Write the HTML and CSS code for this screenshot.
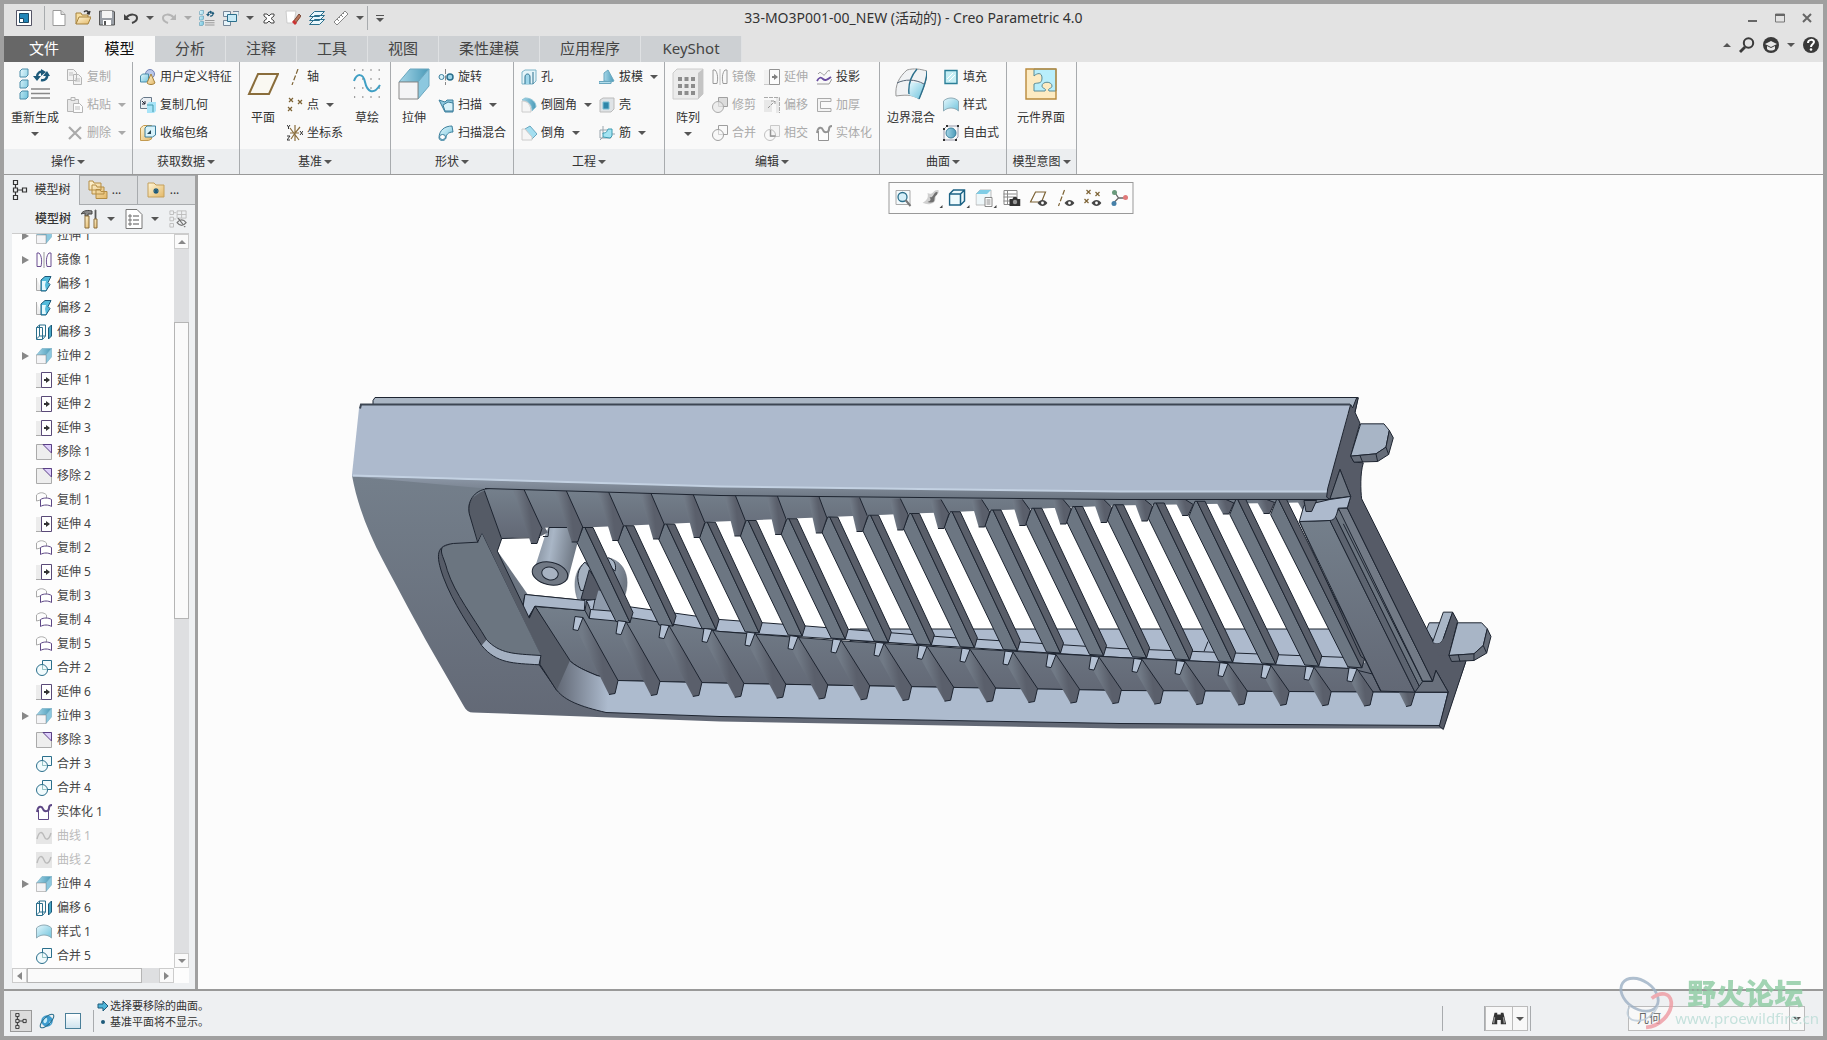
FILE: index.html
```html
<!DOCTYPE html>
<html lang="zh-CN">
<head>
  <meta charset="UTF-8">
  <meta name="viewport" content="width=device-width, initial-scale=1.0">
  <title>33-MO3P001-00_NEW (活动的) - Creo Parametric 4.0</title>
  <link rel="stylesheet" href="styles.css">
</head>
<body>
  <!-- Icon set -->
  <svg class="sprite" aria-hidden="true">
    <defs>
      <linearGradient id="aqua" x1="0" y1="0" x2="1" y2="1"><stop offset="0" stop-color="#e6f8fd"/><stop offset="1" stop-color="#6fc3dc"/></linearGradient>
      <linearGradient id="deep" x1="0" y1="0" x2="1" y2="0"><stop offset="0" stop-color="#a5d6e8"/><stop offset="1" stop-color="#4a9ab8"/></linearGradient>
      <linearGradient id="gold" x1="0" y1="0" x2="1" y2="1"><stop offset="0" stop-color="#fff6d8"/><stop offset="1" stop-color="#e3b868"/></linearGradient>
    </defs>
    <symbol id="i-app" viewBox="0 0 16 16"><path d="M.5.5h15v15H.5z" fill="#fff" stroke="#556"/><path d="M3.5 3.5h9v9h-9z" fill="#2386b8" stroke="#1b4a66"/><path d="M3.5 8.5h4v4h-4z" fill="#fff" stroke="#1b4a66"/></symbol>
    <symbol id="i-new" viewBox="0 0 16 16"><path d="M2 .5h8l4 4v11H2z" fill="#fff" stroke="#999"/><path d="M10 .5v4h4" fill="#ddd" stroke="#999"/></symbol>
    <symbol id="i-open" viewBox="0 0 16 16"><path d="M1 14V3h5l1 2h6v3" fill="#f7dea0" stroke="#a5813c"/><path d="M1 14l3-7h12l-3 7z" fill="url(#gold)" stroke="#a5813c"/><path d="M9 2c2-2 4-1 5 1M12 3l2 1 1-3" fill="none" stroke="#333" stroke-width="1.4"/></symbol>
    <symbol id="i-save" viewBox="0 0 16 16"><path d="M.5 1h14l1 1v13H.5z" fill="#9a9fa6" stroke="#555"/><path d="M3 1h10v7H3z" fill="#f4f4f4"/><path d="M4 10h8v5H4z" fill="#fff"/><path d="M5 11h2v4H5z" fill="#555"/></symbol>
    <symbol id="i-undo" viewBox="0 0 16 16"><path d="M3 8c4-5 11-4 11 0 0 3-2 4-5 5" fill="none" stroke="#444" stroke-width="2"/><path d="M1 4v6h6z" fill="#444"/></symbol>
    <symbol id="i-redo" viewBox="0 0 16 16"><path d="M13 8C9 3 2 4 2 8c0 3 2 4 5 5" fill="none" stroke="#b5b5b5" stroke-width="2"/><path d="M15 4v6H9z" fill="#b5b5b5"/></symbol>
    <symbol id="i-regen" viewBox="0 0 32 32">
      <g fill="url(#aqua)" stroke="#4a8ca8"><path d="M1 3l2-2h6v6L7 9H1zM1 14l2-2h6v6l-2 2H1zM1 25l2-2h6v6l-2 2H1z"/></g>
      <path d="M12 21h19M12 25.500h19M12 30h19" stroke="#888" stroke-width="1.6"/>
      <path d="M18 9c0-4 3-6 6-5M28 6c1 4-2 7-6 6" fill="none" stroke="#1d5a7a" stroke-width="2.4"/><path d="M14 8h8l-4 5zM24 8h7l-3-5zM22 1l5 3-5 4z" fill="#1d5a7a"/>
    </symbol>
    <symbol id="i-windows" viewBox="0 0 16 16"><path d="M.5 1.5h7v5h-7zM.5 10.5h7v5h-7zM10 1.500h6v4" fill="#e6f4fa" stroke="#789"/><path d="M4.5 4.5h9v7h-9z" fill="#c8eaf6" stroke="#2b6f8c"/></symbol>
    <symbol id="i-closewin" viewBox="0 0 16 16"><path d="M3 4h3l2 2 2-2h3v2l-3 2.500 3 2.500v2h-3l-2-2-2 2H3v-2l3-2.500L3 6z" fill="#fff" stroke="#444"/></symbol>
    <symbol id="i-erase" viewBox="0 0 16 16"><path d="M1 1h10l-2 12H2z" fill="#fff" stroke="#ccc"/><path d="M8 12l6-8 2 2-6 8z" fill="#b9745a" stroke="#7b4a38"/><path d="M7 12l2-2 3 3-2 2z" fill="#c33"/></symbol>
    <symbol id="i-layers" viewBox="0 0 16 16"><path d="M.5 14.5l5-5h10l-5 5zM.5 10.5l5-5h10l-5 5zM.5 6.5l5-5h10l-5 5z" fill="#e9f8fd" stroke="#2b6f8c"/></symbol>
    <symbol id="i-ruler" viewBox="0 0 16 16"><path d="M1 12L12 1l3 3L4 15z" fill="#fff" stroke="#888"/><path d="M4 9l2 2M6 7l1 1M8 5l2 2M10 3l1 1" stroke="#888"/></symbol>
    <symbol id="i-copy" viewBox="0 0 16 16"><path d="M.5.5h6l3 3v8h-9zM6.5 5.5h5l3 3v7h-8z" fill="#eee" stroke="#888"/><path d="M2 4h4M2 6h4M8 10h5M8 12h5" stroke="#999"/></symbol>
    <symbol id="i-paste" viewBox="0 0 16 16"><path d="M.5 2.5h11v12H.5z" fill="#ddd" stroke="#888"/><path d="M4 .5h4v3H4z" fill="#eee" stroke="#888"/><path d="M6.5 6.5h6l3 3v6h-9z" fill="#fff" stroke="#888"/><path d="M8 10h5M8 12h5" stroke="#999"/></symbol>
    <symbol id="i-delete" viewBox="0 0 16 16"><path d="M2 2l12 12M14 2L2 14" stroke="#777" stroke-width="2.2"/></symbol>
    <symbol id="i-udf" viewBox="0 0 16 16"><circle cx="10" cy="5" r="4.500" fill="#b9c8ea" stroke="#7182b5"/><path d="M.5 7l2-2h6v6l-2 2h-6z" fill="url(#aqua)" stroke="#4a8ca8"/><path d="M7 14l4-9 4 9c-2 2-6 2-8 0z" fill="url(#gold)" stroke="#a5813c"/></symbol>
    <symbol id="i-copygeom" viewBox="0 0 16 16"><path d="M.5 3l3-2.500h8v9l-2 2h-9z" fill="#e8edf2" stroke="#678"/><path d="M2 4l3 3M5 4v3H2" stroke="#223" fill="none"/><path d="M7 7l2-2h7v9l-2 2H7z" fill="#a8e4f8"/><path d="M7 8h6v7" fill="none" stroke="#49a"/></symbol>
    <symbol id="i-shrink" viewBox="0 0 16 16"><path d="M.5 3l3-2.500h8V14l-3 1.500h-8z" fill="url(#gold)" stroke="#c39a50"/><path d="M5 3l2-2h8.500v9l-3 2H5z" fill="#d7f2fa" stroke="#3c7f9c"/><path d="M7 9l4-4v4z" fill="#245"/></symbol>
    <symbol id="i-plane" viewBox="0 0 32 32"><path d="M11 6h20l-9 20H2z" fill="#faf8f2" stroke="#8a6d3b" stroke-width="2"/></symbol>
    <symbol id="i-axis" viewBox="0 0 16 16"><path d="M11 0L5 16" stroke="#7d6335" stroke-width="1.2" stroke-dasharray="5 2"/></symbol>
    <symbol id="i-point" viewBox="0 0 16 16"><path d="M2 1l4 4M6 1L2 5M11 3l4 4M15 3l-4 4M1 10l4 4M5 10l-4 4" stroke="#7d6335" stroke-width="1.2"/></symbol>
    <symbol id="i-csys" viewBox="0 0 16 16"><path d="M8 0v16M3 3l9 12M13 2L8 8l-4 6M3 8h9" fill="none" stroke="#8a6d3b" stroke-width="1.2"/><path d="M0 0l1.500 2L3 0M1.500 2v2M0 11h3l-3 4h3M13 6l3 4M16 6l-3 4" fill="none" stroke="#333"/></symbol>
    <symbol id="i-sketch" viewBox="0 0 32 32"><path d="M3 2h26M3 11h26M3 20h26M3 29h26" stroke="#444" stroke-width="1.2" stroke-dasharray="1.2 7"/><path d="M3 13c3-8 9-8 11 1s8 14 15 3" fill="none" stroke="#3f9fc4" stroke-width="2"/></symbol>
    <symbol id="i-extrude" viewBox="0 0 32 32"><path d="M1 14L12 1h19L20 14z" fill="url(#deep)" stroke="#6aa7bf"/><path d="M20 14L31 1v17L20 31z" fill="#8cc8df" stroke="#6aa7bf"/><path d="M1 14h19v17H1z" fill="#f4f4f6" stroke="#888"/></symbol>
    <symbol id="i-revolve" viewBox="0 0 16 16"><circle cx="3.5" cy="8" r="2.500" fill="#d8f2fa" stroke="#3c7f9c"/><circle cx="12" cy="8" r="3" fill="#9fd6ea" stroke="#2b6f8c" stroke-width="1.5"/><path d="M7.5 0v16" stroke="#888" stroke-dasharray="5 1.5"/></symbol>
    <symbol id="i-sweep" viewBox="0 0 16 16"><path d="M1 3l6 2 2-2h6v12h-8l-3-6z" fill="#8cc8df" stroke="#3c7f9c"/><path d="M5 8l5-3 5 1v8H7z" fill="#d8f2fa" stroke="#3c7f9c"/></symbol>
    <symbol id="i-blend" viewBox="0 0 16 16"><path d="M1 13C1 5 7 1 14 1l1 6c-5 0-7 3-7 6-1 3-6 4-7 0z" fill="url(#aqua)" stroke="#3c7f9c"/><ellipse cx="4.5" cy="12" rx="3" ry="2.5" fill="#fff" stroke="#3c7f9c"/></symbol>
    <symbol id="i-hole" viewBox="0 0 16 16"><path d="M1 3l3-2h11v11l-3 3H1z" fill="#e4f4f9" stroke="#7db4c8"/><path d="M4 15V8c0-4 5-4 5 0v7M12 3v12" fill="#9fd6ea" stroke="#2b6f8c"/></symbol>
    <symbol id="i-round" viewBox="0 0 16 16"><path d="M1 3l3-2c7 0 11 4 11 9l-4 4c0-6-3-10-10-11z" fill="url(#deep)" stroke="#8fc4d6"/><path d="M1 4c6 0 9 4 9 11H1z" fill="#f5f5f5" stroke="#ccc"/></symbol>
    <symbol id="i-chamfer" viewBox="0 0 16 16"><path d="M4 4l5-3 7 8-5 5z" fill="#a4def0" stroke="#6aa7bf"/><path d="M1 4h3l7 8v3H1z" fill="#f5f5f5" stroke="#ccc"/></symbol>
    <symbol id="i-draft" viewBox="0 0 16 16"><path d="M5 12V4l4-3 6 11-3 1z" fill="url(#deep)" stroke="#6aa7bf"/><path d="M0 12.500h12v2H0z" fill="#b4deec" stroke="#6aa7bf"/></symbol>
    <symbol id="i-shell" viewBox="0 0 16 16"><path d="M1 3l3-2h11v11l-3 3H1z" fill="#dfe3e6" stroke="#bbb"/><path d="M4 5h6v7H4z" fill="#2f86a9" stroke="#7bbdd3"/></symbol>
    <symbol id="i-rib" viewBox="0 0 16 16"><path d="M1 5h11v8H1zM4 1v8h12M1 15l3-3" fill="none" stroke="#99a5ad"/><path d="M4 12V8c4 0 4-2 5-4h4v7l-2 2z" fill="#a4e4f2" stroke="#3c9ab0"/></symbol>
    <symbol id="i-pattern" viewBox="0 0 32 32"><path d="M1 5l4-4h26v25l-5 5H1z" fill="#ebebeb" stroke="#ccc"/><path d="M26 5l5-4v25l-5 5z" fill="#c4c4c4"/><path d="M6 11h17M6 18h17M6 25h17" stroke="#8c8c8c" stroke-width="4" stroke-dasharray="4 2.5"/></symbol>
    <symbol id="i-mirror" viewBox="0 0 16 16"><path d="M1 14.500V1h2c3 3 3 9 2 13.500zM15 14.500V1h-2c-3 3-3 9-2 13.500z" fill="none" stroke="#6b4f91"/><path d="M8 0v16" stroke="#999"/></symbol>
    <symbol id="i-extend" viewBox="0 0 16 16"><path d="M0 1h6v14H0z" fill="#ececec"/><path d="M0 15.5h6" stroke="#aaa"/><path d="M5.500.5h10v15h-10z" fill="#fff" stroke="#5a4a78"/><path d="M8 8h3" stroke="#333" stroke-width="2"/><path d="M10 5l4 3-4 3z" fill="#333"/></symbol>
    <symbol id="i-project" viewBox="0 0 16 16"><path d="M2 5c3-4 4 1 6 1s3-6 6-4" fill="none" stroke="#999"/><path d="M1 12c2-4 4-4 6-2s4 1 8-2" fill="none" stroke="#6b4fa1" stroke-width="1.8"/><path d="M1 15h12l3-5" fill="none" stroke="#999"/></symbol>
    <symbol id="i-merge" viewBox="0 0 16 16"><path d="M6.500.5h9v9h-9z" fill="#f3fafc" stroke="#2b6f8c"/><circle cx="6" cy="10" r="5.5" fill="#eefafd" fill-opacity=".8" stroke="#2b6f8c"/><path d="M6.500 5v4.500h4" fill="none" stroke="#8bb" stroke-width=".8"/></symbol>
    <symbol id="i-trim" viewBox="0 0 16 16"><path d="M6.500.5h9v9h-9z" fill="#ccc" stroke="#666"/><circle cx="6" cy="10" r="5.5" fill="#ddd" fill-opacity=".7" stroke="#777"/></symbol>
    <symbol id="i-offset" viewBox="0 0 16 16"><path d="M0 3h8v12H0zM12 0h3v16h-3z" fill="#ddd"/><path d="M0 .5h15.500V16" fill="none" stroke="#777" stroke-dasharray="4 1"/><path d="M4 11l7-7M7 4h4v4" fill="none" stroke="#555" stroke-dasharray="3 1"/></symbol>
    <symbol id="i-intersect" viewBox="0 0 16 16"><path d="M6.500.5h9v11h-9z" fill="#f2f2f2" stroke="#aaa"/><circle cx="6" cy="10" r="5.5" fill="none" stroke="#999"/><path d="M6.500 5v6h5" fill="none" stroke="#555" stroke-width="1.5"/></symbol>
    <symbol id="i-thicken" viewBox="0 0 16 16"><path d="M15 1.500H1.500v13H15v-3H4.500v-7H15z" fill="#f2f2f2" stroke="#777"/></symbol>
    <symbol id="i-solidify" viewBox="0 0 16 16"><path d="M2.5 6v9.5h10V5" fill="#fff" stroke="#5d4785"/><path d="M1 8c1-7 5-6 6-3s6 3 6-1c0-2 1-3 3-3" fill="none" stroke="#5d4785" stroke-width="2"/></symbol>
    <symbol id="i-boundary" viewBox="0 0 32 32"><path d="M12 2c7-2 13-1 20 1 0 10-4 18-8 28C17 26 9 27 1 28 0 17 4 9 12 2z" fill="#f0f2f4" stroke="#999"/><path d="M14 14c5 0 10 1 15 2l-5 15-10-4z" fill="url(#aqua)"/><path d="M22 1c-6 7-9 16-8 25M32 3c0 10-4 18-8 28" fill="none" stroke="#2b6f8c" stroke-width="1.4"/><path d="M2 15c8-4 18-4 27 1" fill="none" stroke="#567"/></symbol>
    <symbol id="i-fill" viewBox="0 0 16 16"><path d="M2 1.500h12v13H2z" fill="#c5eef4" stroke="#2b7f98" stroke-width="1.4"/><path d="M4 10l6-6M6 12l6-6" stroke="#fff"/></symbol>
    <symbol id="i-style" viewBox="0 0 16 16"><path d="M.5 14V4c4-4 11-4 15 0v10c-4-4-11-4-15 0z" fill="url(#aqua)" stroke="#8fabb6"/></symbol>
    <symbol id="i-freestyle" viewBox="0 0 16 16"><path d="M1 4l3-3h11v11l-3 3H1z" fill="none" stroke="#99a"/><circle cx="8" cy="8" r="5" fill="url(#deep)" stroke="#3c7f9c"/><path d="M0 3h2v2H0zM3 0h2v2H3zM14 0h2v2h-2zM0 14h2v2H0zM12 14h2v2h-2z" fill="#333"/></symbol>
    <symbol id="i-puzzle" viewBox="0 0 32 32"><path d="M1 1h30v30H1z" fill="#fdebc2"/><path d="M9 1h22v22h-7c-2-3 3-2 3-5 0-5-10-5-10 0 0 3 5 2 3 5H9v-7c3-2 8 1 8-6 0-6-5-5-8-2z" fill="#b8eefb" stroke="#5a8b96"/><path d="M1 1h30v30H1z" fill="none" stroke="#b98a3c" stroke-width="1.4"/></symbol>
    <symbol id="i-offset-a" viewBox="0 0 16 16"><path d="M.5 2v12.500H6" fill="#eee" stroke="#aaa"/><path d="M5 4l4-3.500h6l-3 6 2 2-4 6.500H5z" fill="#52bbdc" stroke="#1d5a7a"/><path d="M6 5h4l-1 4 1 5H6z" fill="#e4f8fd"/></symbol>
    <symbol id="i-offset-b" viewBox="0 0 16 16"><path d="M.5 3.500l3-2.500h6v11l-3 3.500h-6zM3.500 1v11l-3 3M3.500 12h6M6.500 15V3.500h-6" fill="none" stroke="#2b6f8c"/><path d="M12.500 4l3-3v11l-3 3z" fill="#49a8c8" stroke="#1d5a7a"/></symbol>
    <symbol id="i-remove" viewBox="0 0 16 16"><path d="M.5.5h15v15H.5z" fill="#eee" stroke="#aaa"/><path d="M7 .5h8.500V9z" fill="#ded0fa" stroke="#5a3f85"/></symbol>
    <symbol id="i-copysurf" viewBox="0 0 16 16"><path d="M.5 9V3c3-3 7-3 10 0v4M.5 9l4-1" fill="none" stroke="#aaa"/><path d="M4.500 14.500v-7c3-2 8-2 11 0v7c-3-2-8-2-11 0z" fill="#fff" stroke="#5d4785"/></symbol>
    <symbol id="i-curve" viewBox="0 0 16 16"><path d="M0 0h16v16H0z" fill="#e6e6e6"/><path d="M1 11c2-8 5-8 7-3s5 4 7-3" fill="none" stroke="#bbb" stroke-width="1.4"/></symbol>
    <symbol id="i-tree" viewBox="0 0 16 20"><path d="M1.500.5h4v4h-4zM1.500 8h4v4h-4zM10.500 8h4v4h-4zM1.500 15.500h4v4h-4zM3.500 4.500V8M3.500 12v3.500M5.500 10h5" fill="none" stroke="#333" stroke-width="1.2"/></symbol>
    <symbol id="i-folders" viewBox="0 0 20 20"><g fill="url(#gold)" stroke="#b48d45"><path d="M1 10V1h4l1 2h7v7zM4 14V5h4l1 2h7v7zM8 18.500V9.500h4l1 2h6v7z"/></g></symbol>
    <symbol id="i-fav" viewBox="0 0 20 20"><path d="M2 17V3h6l2 2h8v12z" fill="url(#gold)" stroke="#c4a05c"/><path d="M10 8v6M7 11h6M8 9l4 4M12 9l-4 4" stroke="#1d5a7a" stroke-width="1.2"/></symbol>
    <symbol id="i-tools" viewBox="0 0 18 20"><path d="M0 5c2-4 8-4 11-3v3H7v2H4V4z" fill="#888" stroke="#444"/><path d="M4 7h4v12H4z" fill="url(#gold)" stroke="#8a6d3b"/><path d="M14 1h1v9h-1z" stroke="#777"/><path d="M13 10h3v9h-3z" fill="url(#gold)" stroke="#8a6d3b"/></symbol>
    <symbol id="i-list" viewBox="0 0 18 20"><path d="M1 .5h11l5 5v14H1z" fill="#fff" stroke="#777"/><path d="M8 7h6M8 11h6M8 15h6" stroke="#555"/><path d="M4 6h2v2H4zM4 10h2v2H4zM4 14h2v2H4z" fill="none" stroke="#555" stroke-width=".8"/></symbol>
    <symbol id="i-treehide" viewBox="0 0 20 20"><path d="M1 1h4v4H1zM1 8h4v4H1zM1 15h4v4H1zM5 3h3M5 10h3M9 1h10v8H9zM14 1v8M9 5h10" fill="none" stroke="#bbb"/><path d="M9 14c3-4 7-4 10 0-3 4-7 4-10 0zM10 9l8 10" fill="none" stroke="#777" stroke-width="1.3"/></symbol>
    <symbol id="i-zoomfit" viewBox="0 0 18 18"><path d="M1.500 1.500h14v14h-14z" fill="#f4fafc" stroke="#aaa"/><circle cx="8" cy="8" r="4.5" fill="#d5eff8" stroke="#2b6f8c" stroke-width="1.3"/><path d="M11 11l5 6" stroke="#777" stroke-width="2"/></symbol>
    <symbol id="i-shade" viewBox="0 0 18 18"><path d="M6 4c6 3 5-4 11-3 1 5-3 4-3 8s-2 5-5 6c-4 1-5-1-8-1 5-3 6-6 5-10z" fill="#d0d0d0"/><path d="M8 8c4 2 4-6 8-5 0 4-3 3-3 7s-3 4-7 3c3-1 4-2 2-5z" fill="#707070"/></symbol>
    <symbol id="i-cube" viewBox="0 0 18 18"><path d="M1 5l4-4h11v11l-4 4H1zM1 5h11v11M12 5l4-4" fill="#eefafd" stroke="#1d6385" stroke-width="1.5"/></symbol>
    <symbol id="i-views" viewBox="0 0 18 18"><path d="M.5 5l4-4h11v11l-4 4H.5z" fill="#eef7fa" stroke="#bbb"/><path d="M.5 5l4-4h11l-4 4z" fill="#7fcde6"/><path d="M9.500 8.500h7v9h-7z" fill="#fff" stroke="#888"/><path d="M11 11h4M11 13h4M11 15h4" stroke="#888"/></symbol>
    <symbol id="i-snap" viewBox="0 0 18 18"><path d="M1.500 1.500h13v14h-13zM1 5h13M5 1v14M1 8h13M1 12h13" fill="#fff" stroke="#888"/><path d="M7 10h3l1-2h3l1 2h3v7H7z" fill="#333"/><circle cx="12.5" cy="13" r="2.2" fill="#999"/></symbol>
    <symbol id="i-eyeplane" viewBox="0 0 18 18"><path d="M6 3h10l-4 10H1z" fill="none" stroke="#7d6335" stroke-width="1.2"/><path d="M8 14c3-4 7-4 10 0-3 4-7 4-10 0z" fill="#444"/><circle cx="13" cy="14" r="1.4" fill="#fff"/></symbol>
    <symbol id="i-eyeaxis" viewBox="0 0 18 18"><path d="M8 1L2 17" stroke="#7d6335" stroke-width="1.2" stroke-dasharray="5 2"/><path d="M8 14c3-4 7-4 10 0-3 4-7 4-10 0z" fill="#444"/><circle cx="13" cy="14" r="1.4" fill="#fff"/></symbol>
    <symbol id="i-eyepoint" viewBox="0 0 18 18"><path d="M3 1l4 4M7 1L3 5M12 3l4 4M16 3l-4 4M1 10l4 4M5 10l-4 4" stroke="#7d6335" stroke-width="1.2"/><path d="M8 14c3-4 7-4 10 0-3 4-7 4-10 0z" fill="#444"/><circle cx="13" cy="14" r="1.4" fill="#fff"/></symbol>
    <symbol id="i-spin" viewBox="0 0 18 18"><path d="M4 3l4 6-5 5M8 9h7" fill="none" stroke="#666" stroke-width="1.3"/><circle cx="4" cy="3.500" r="2.500" fill="#6a9a7c"/><circle cx="3.5" cy="14.5" r="2.5" fill="#4680a8"/><circle cx="15" cy="8.5" r="2.5" fill="#e07a7a"/></symbol>
    <symbol id="i-globe" viewBox="0 0 18 18"><circle cx="9" cy="9" r="6.5" fill="#3c9cd0"/><path d="M5 6c3-3 5 0 4 3s-3 3-4 1zM11 10l3-1-1 4z" fill="#c4ecfa"/><ellipse cx="9" cy="9" rx="10" ry="4" transform="rotate(-45 9 9)" fill="none" stroke="#2b6f8c" stroke-width="1.2"/></symbol>
    <symbol id="i-binoc" viewBox="0 0 18 16"><path d="M4 1h3v2h4V1h3l3 13h-6V9H7v5H1z" fill="#333"/><path d="M4 6l-1 7M14 6l1 7" stroke="#999" stroke-width="1.5"/></symbol>
    <symbol id="i-search" viewBox="0 0 16 16"><circle cx="9.5" cy="6" r="4.7" fill="none" stroke="#3a3a3a" stroke-width="2"/><path d="M6 10l-5 5" stroke="#3a3a3a" stroke-width="2.8"/></symbol>
    <symbol id="i-learn" viewBox="0 0 16 16"><circle cx="8" cy="8" r="8" fill="#3a3a3a"/><path d="M2 7l6-3 6 3-6 3zM4 9v3c2 2 6 2 8 0V9l-4 2z" fill="#e8e8e8"/></symbol>
    <symbol id="i-help" viewBox="0 0 16 16"><circle cx="8" cy="8" r="8" fill="#3a3a3a"/><path d="M5 6c0-4 6-4 6-1 0 2-3 2-3 5" fill="none" stroke="#fff" stroke-width="2"/><circle cx="8" cy="12.5" r="1.3" fill="#fff"/></symbol>
    <symbol id="i-min" viewBox="0 0 12 12"><path d="M1 9h9" stroke="#666" stroke-width="2"/></symbol>
    <symbol id="i-max" viewBox="0 0 12 12"><path d="M1.5 2h9v8h-9z" fill="none" stroke="#777"/><path d="M1 3h10" stroke="#666" stroke-width="2"/></symbol>
    <symbol id="i-x" viewBox="0 0 12 12"><path d="M2 2l8 8M10 2l-8 8" stroke="#666" stroke-width="2"/></symbol>
    <symbol id="i-arrow" viewBox="0 0 12 12"><path d="M1 4h5V1l5 5-5 5V8H1z" fill="#4fb4d8" stroke="#1d5a7a"/></symbol>
  </svg>

  <header class="titlebar">
    <div class="quick">
      <button class="quick-app" aria-label="Creo"><svg><use href="#i-app"/></svg></button>
      <button aria-label="新建"><svg><use href="#i-new"/></svg></button>
      <button aria-label="打开"><svg><use href="#i-open"/></svg></button>
      <button aria-label="保存"><svg><use href="#i-save"/></svg></button>
      <button aria-label="撤销"><svg><use href="#i-undo"/></svg></button>
      <button class="drop" aria-label="撤销列表"><i class="caret"></i></button>
      <button aria-label="重做" disabled><svg><use href="#i-redo"/></svg></button>
      <button class="drop" aria-label="重做列表" disabled><i class="caret"></i></button>
      <button aria-label="重新生成"><svg><use href="#i-regen"/></svg></button>
      <button aria-label="窗口"><svg><use href="#i-windows"/></svg></button>
      <button class="drop" aria-label="窗口列表"><i class="caret"></i></button>
      <button aria-label="关闭窗口"><svg><use href="#i-closewin"/></svg></button>
      <button aria-label="拭除"><svg><use href="#i-erase"/></svg></button>
      <button aria-label="层"><svg><use href="#i-layers"/></svg></button>
      <button aria-label="测量"><svg><use href="#i-ruler"/></svg></button>
      <button class="drop" aria-label="测量列表"><i class="caret"></i></button>
      <button class="quick-more" aria-label="自定义"><i class="caret"></i></button>
    </div>
    <h1>33-MO3P001-00_NEW (活动的) - Creo Parametric 4.0</h1>
    <div class="window-buttons">
      <button aria-label="最小化"><svg><use href="#i-min"/></svg></button>
      <button aria-label="最大化"><svg><use href="#i-max"/></svg></button>
      <button aria-label="关闭"><svg><use href="#i-x"/></svg></button>
    </div>
  </header>

  <nav class="tabs">
    <button class="tab file">文件</button>
    <button class="tab active">模型</button>
    <button class="tab">分析</button>
    <button class="tab">注释</button>
    <button class="tab">工具</button>
    <button class="tab">视图</button>
    <button class="tab wide">柔性建模</button>
    <button class="tab wide">应用程序</button>
    <button class="tab wide">KeyShot</button>
    <div class="help-buttons">
      <button aria-label="折叠"><i class="caret up"></i></button>
      <button aria-label="搜索"><svg><use href="#i-search"/></svg></button>
      <button aria-label="学习"><svg><use href="#i-learn"/></svg></button>
      <button class="drop" aria-label="更多"><i class="caret"></i></button>
      <button aria-label="帮助"><svg><use href="#i-help"/></svg></button>
    </div>
  </nav>

  <section class="ribbon">
    <div class="group ops">
      <div class="tools">
        <button class="big long"><svg><use href="#i-regen"/></svg>重新生成<i class="caret"></i></button>
        <div class="col">
          <button disabled><svg><use href="#i-copy"/></svg>复制</button>
          <button disabled><svg><use href="#i-paste"/></svg>粘贴<i class="caret"></i></button>
          <button disabled><svg><use href="#i-delete"/></svg>删除<i class="caret"></i></button>
        </div>
      </div>
      <button class="group-name">操作<i class="caret"></i></button>
    </div>
    <div class="group data">
      <div class="tools">
        <div class="col">
          <button><svg><use href="#i-udf"/></svg>用户定义特征</button>
          <button><svg><use href="#i-copygeom"/></svg>复制几何</button>
          <button><svg><use href="#i-shrink"/></svg>收缩包络</button>
        </div>
      </div>
      <button class="group-name">获取数据<i class="caret"></i></button>
    </div>
    <div class="group datum">
      <div class="tools">
        <button class="big"><svg><use href="#i-plane"/></svg>平面</button>
        <div class="col">
          <button><svg><use href="#i-axis"/></svg>轴</button>
          <button><svg><use href="#i-point"/></svg>点<i class="caret"></i></button>
          <button><svg><use href="#i-csys"/></svg>坐标系</button>
        </div>
        <button class="big"><svg><use href="#i-sketch"/></svg>草绘</button>
      </div>
      <button class="group-name">基准<i class="caret"></i></button>
    </div>
    <div class="group shape">
      <div class="tools">
        <button class="big"><svg><use href="#i-extrude"/></svg>拉伸</button>
        <div class="col">
          <button><svg><use href="#i-revolve"/></svg>旋转</button>
          <button><svg><use href="#i-sweep"/></svg>扫描<i class="caret"></i></button>
          <button><svg><use href="#i-blend"/></svg>扫描混合</button>
        </div>
      </div>
      <button class="group-name">形状<i class="caret"></i></button>
    </div>
    <div class="group engineering">
      <div class="tools">
        <div class="col">
          <button><svg><use href="#i-hole"/></svg>孔</button>
          <button><svg><use href="#i-round"/></svg>倒圆角<i class="caret"></i></button>
          <button><svg><use href="#i-chamfer"/></svg>倒角<i class="caret"></i></button>
        </div>
        <div class="col">
          <button><svg><use href="#i-draft"/></svg>拔模<i class="caret"></i></button>
          <button><svg><use href="#i-shell"/></svg>壳</button>
          <button><svg><use href="#i-rib"/></svg>筋<i class="caret"></i></button>
        </div>
      </div>
      <button class="group-name">工程<i class="caret"></i></button>
    </div>
    <div class="group edit">
      <div class="tools">
        <button class="big"><svg><use href="#i-pattern"/></svg>阵列<i class="caret"></i></button>
        <div class="col">
          <button disabled><svg><use href="#i-mirror"/></svg>镜像</button>
          <button disabled><svg><use href="#i-trim"/></svg>修剪</button>
          <button disabled><svg><use href="#i-merge"/></svg>合并</button>
        </div>
        <div class="col">
          <button disabled><svg><use href="#i-extend"/></svg>延伸</button>
          <button disabled><svg><use href="#i-offset"/></svg>偏移</button>
          <button disabled><svg><use href="#i-intersect"/></svg>相交</button>
        </div>
        <div class="col">
          <button><svg><use href="#i-project"/></svg>投影</button>
          <button disabled><svg><use href="#i-thicken"/></svg>加厚</button>
          <button disabled><svg><use href="#i-solidify"/></svg>实体化</button>
        </div>
      </div>
      <button class="group-name">编辑<i class="caret"></i></button>
    </div>
    <div class="group surface">
      <div class="tools">
        <button class="big long"><svg><use href="#i-boundary"/></svg>边界混合</button>
        <div class="col">
          <button><svg><use href="#i-fill"/></svg>填充</button>
          <button><svg><use href="#i-style"/></svg>样式</button>
          <button><svg><use href="#i-freestyle"/></svg>自由式</button>
        </div>
      </div>
      <button class="group-name">曲面<i class="caret"></i></button>
    </div>
    <div class="group intent">
      <div class="tools">
        <button class="big long"><svg><use href="#i-puzzle"/></svg>元件界面</button>
      </div>
      <button class="group-name">模型意图<i class="caret"></i></button>
    </div>
  </section>

  <main>
    <aside class="navigator">
      <div class="nav-tabs">
        <button class="active"><svg><use href="#i-tree"/></svg>模型树</button>
        <button aria-label="文件夹浏览器"><svg><use href="#i-folders"/></svg>...</button>
        <button aria-label="收藏夹"><svg><use href="#i-fav"/></svg>...</button>
      </div>
      <div class="tree-head">
        <h2>模型树</h2>
        <button aria-label="设置"><svg><use href="#i-tools"/></svg><i class="caret"></i></button>
        <button aria-label="显示"><svg><use href="#i-list"/></svg><i class="caret"></i></button>
        <button aria-label="过滤"><svg><use href="#i-treehide"/></svg></button>
      </div>
      <div class="tree-box">
        <ul class="tree">
          <li class="parent"><svg><use href="#i-extrude"/></svg>拉伸 1</li>
          <li class="parent"><svg><use href="#i-mirror"/></svg>镜像 1</li>
          <li><svg><use href="#i-offset-a"/></svg>偏移 1</li>
          <li><svg><use href="#i-offset-a"/></svg>偏移 2</li>
          <li><svg><use href="#i-offset-b"/></svg>偏移 3</li>
          <li class="parent"><svg><use href="#i-extrude"/></svg>拉伸 2</li>
          <li><svg><use href="#i-extend"/></svg>延伸 1</li>
          <li><svg><use href="#i-extend"/></svg>延伸 2</li>
          <li><svg><use href="#i-extend"/></svg>延伸 3</li>
          <li><svg><use href="#i-remove"/></svg>移除 1</li>
          <li><svg><use href="#i-remove"/></svg>移除 2</li>
          <li><svg><use href="#i-copysurf"/></svg>复制 1</li>
          <li><svg><use href="#i-extend"/></svg>延伸 4</li>
          <li><svg><use href="#i-copysurf"/></svg>复制 2</li>
          <li><svg><use href="#i-extend"/></svg>延伸 5</li>
          <li><svg><use href="#i-copysurf"/></svg>复制 3</li>
          <li><svg><use href="#i-copysurf"/></svg>复制 4</li>
          <li><svg><use href="#i-copysurf"/></svg>复制 5</li>
          <li><svg><use href="#i-merge"/></svg>合并 2</li>
          <li><svg><use href="#i-extend"/></svg>延伸 6</li>
          <li class="parent"><svg><use href="#i-extrude"/></svg>拉伸 3</li>
          <li><svg><use href="#i-remove"/></svg>移除 3</li>
          <li><svg><use href="#i-merge"/></svg>合并 3</li>
          <li><svg><use href="#i-merge"/></svg>合并 4</li>
          <li><svg><use href="#i-solidify"/></svg>实体化 1</li>
          <li class="hidden-item"><svg><use href="#i-curve"/></svg>曲线 1</li>
          <li class="hidden-item"><svg><use href="#i-curve"/></svg>曲线 2</li>
          <li class="parent"><svg><use href="#i-extrude"/></svg>拉伸 4</li>
          <li><svg><use href="#i-offset-b"/></svg>偏移 6</li>
          <li><svg><use href="#i-style"/></svg>样式 1</li>
          <li><svg><use href="#i-merge"/></svg>合并 5</li>
        </ul>
        <div class="vscroll">
          <button aria-label="向上"><i class="caret up"></i></button>
          <div class="track"><div class="thumb"></div></div>
          <button aria-label="向下"><i class="caret"></i></button>
        </div>
        <div class="hscroll">
          <button aria-label="向左"><i class="caret left"></i></button>
          <div class="track"><div class="thumb"></div></div>
          <button aria-label="向右"><i class="caret right"></i></button>
        </div>
      </div>
    </aside>

    <section class="canvas">
      <div class="view-bar">
        <button aria-label="重新调整"><svg><use href="#i-zoomfit"/></svg></button>
        <button class="more" aria-label="渲染"><svg><use href="#i-shade"/></svg></button>
        <button class="more" aria-label="显示样式"><svg><use href="#i-cube"/></svg></button>
        <button class="more" aria-label="已保存方向"><svg><use href="#i-views"/></svg></button>
        <button aria-label="视图管理器"><svg><use href="#i-snap"/></svg></button>
        <button aria-label="平面显示"><svg><use href="#i-eyeplane"/></svg></button>
        <button aria-label="轴显示"><svg><use href="#i-eyeaxis"/></svg></button>
        <button aria-label="点显示"><svg><use href="#i-eyepoint"/></svg></button>
        <button aria-label="旋转中心"><svg><use href="#i-spin"/></svg></button>
      </div>

      <!-- Part geometry -->
      <svg class="part" viewBox="198 175 1625 813" role="img" aria-label="33-MO3P001-00_NEW">
        <defs>
          <linearGradient id="face" x1="0" y1="0" x2="0" y2="1"><stop offset="0" stop-color="#747f8b"/><stop offset="1" stop-color="#626875"/></linearGradient>
          <linearGradient id="bevel" x1="0" y1="0" x2="0" y2="1"><stop offset="0" stop-color="#8d98a7"/><stop offset="1" stop-color="#6b7581"/></linearGradient>
          <linearGradient id="shelf" gradientUnits="userSpaceOnUse" x1="552" y1="0" x2="608" y2="0"><stop offset="0" stop-color="#5a606c"/><stop offset="1" stop-color="#adbbce"/></linearGradient>
          <linearGradient id="tube" x1="0" y1="0" x2="1" y2=".2"><stop offset="0" stop-color="#7b8592"/><stop offset=".45" stop-color="#a9b6c6"/><stop offset="1" stop-color="#6f7884"/></linearGradient>
          <linearGradient id="tooth" x1="0" y1=".6" x2="1" y2=".4"><stop offset=".2" stop-color="#717a86"/><stop offset=".6" stop-color="#5a5f6b"/></linearGradient>
        </defs>
        <path d="M352 475C357 503 368 532 383 560 400 592 416 622 430 647L464 706Q467 712 473 712L720 721 1120 728H1443L1466 662 1425 650 1345 490z" fill="url(#face)"/>

        <!-- grille opening and back ledges -->
        <path d="M497 550L502 536 545 527 1240 500 1300 500 1365 662 560 640z" fill="#fff"/>
        <path d="M850 628.500H1330L1350 668 850 640z" class="lit"/>
        <path d="M1208 641l-4 10" class="line"/>
        <path d="M525 594L585 600 720 619 800 625 950 637 1120 648 1348 657V668L1120 657 720 631 540 613 528 618 522 609z" class="lit"/>
        <path d="M535 606L585 610 720 631 850 641 1000 650 1120 657 1350 668 1448 692 1120 690 740 683 618 680 597 675C580 668 572 664 565 655z" fill="url(#face)" class="ink"/>

        <!-- screw bosses -->
        <g transform="translate(340 380) scale(.3333)">
          <path d="M617 460L582 570C600 545 680 560 683 600L712 490 700 440H625z" fill="url(#tube)"/>
          <ellipse cx="630" cy="579" rx="54" ry="34" transform="rotate(12 630 579)" fill="#717985" class="bold"/>
          <ellipse cx="630" cy="579" rx="25" ry="19" transform="rotate(12 630 579)" fill="#a7b2c1" class="bold"/>
          <path d="M735 545C700 570 700 620 712 655l50 28 68 5C880 630 870 545 805 532z" fill="url(#tube)" class="thin"/>
          <path d="M805 532c20 5 25 25 20 40l-30-30z" fill="#a9b6c6" class="bold"/>
          <path d="M722 630c-15-40-10-65 13-85l22 25-20 60z" fill="#a4b0bf" class="bold"/>
          <path d="M748 568l42 65-27 27-40-4z" fill="#555a66" class="bold"/>
          <path d="M775 630l-15 55 65 15-10-60z" fill="#8f9bab"/>
          <path d="M555 642l180 18-2 30-148-13-20 34-17-25z" fill="#a9b6c8" class="bold"/>
          <path d="M735 690l5-30 12 30-4 24z" fill="#6a727e" class="bold"/>
          <path d="M740 660l25-3-6 30M752 687l65 5 15 30-84-8z" fill="#aebbce" class="bold"/>
        </g>
        <path d="M484 490L1120 499H1330L1300 502 1113 505 720 521 585 527 545 527 548 532 540 536 502 538z" fill="url(#face)"/>
        <path d="M502 538L540 537M543 536l5 0 1-9h18" class="line"/>

        <!-- lit lower shelf -->
        <path d="M535 606L565 655C572 664 580 668 597 675L618 680 740 683 1120 690 1448 692 1440 725 1120 723 720 716 606 712C580 706 565 700 557 690L539 664 529 617z" fill="url(#shelf)" class="ink"/>

        <g id="ribs"></g>

        <!-- left wall and finger recess -->
        <g transform="translate(340 380) scale(.3333)">
          <path d="M433 330C390 350 380 370 386 395L415 485 426 460 600 825V852L650 930 690 840 585 677 568 713 472 512 485 475z" fill="#555b66"/>
          <path d="M650 930C640 915 690 850 690 840L735 870 720 970z" fill="url(#tube)" opacity="0"/>
          <path d="M650 930L600 852V825L426 460 413 485 388 400C380 355 410 325 450 324M433 330L485 475 472 512 568 713 585 677 690 840" class="bold" fill="none"/>
          <path d="M415 485l-75 4C290 495 285 520 310 590 340 670 390 740 425 795 470 850 520 848 597 853L603 825 426 460z" fill="#6b7580"/>
          <path d="M340 489C290 495 285 520 310 590 340 670 390 740 425 795L440 778C400 710 345 640 322 570 312 530 300 520 306 502z" fill="#565c68"/>
          <path d="M425 795C470 850 520 848 597 853L603 825C520 820 480 820 440 778z" fill="#a4b0c1"/>
          <path d="M415 485l-75 4C290 495 285 520 310 590 340 670 390 740 425 795 470 850 520 848 597 853L603 825C520 820 480 820 440 778 400 710 345 640 322 570 312 530 300 520 306 502" class="bold" fill="none"/>
        </g>

        <!-- front cover face -->
        <path d="M373 404v-4l2-3H1358l-3 15H1350z" fill="#aab6c4" class="ink"/>
        <path d="M352 474L359 408 361 404H1350L1328 492 1120 491 720 486 352 476z" fill="#adbacd"/>
        <path d="M360 408l1-4H1350" class="edge"/>
        <path d="M353 476L720 487 1120 492H1328V499H1120L720 495 485 488z" fill="url(#bevel)"/>
        <path d="M485 488L720 495 1120 499H1330" class="line"/>
        <path d="M353 475L720 486 1120 491H1328" fill="none" stroke="#c3d1e2" stroke-width="2"/>

        <!-- end cap, rails and clips -->
        <g transform="translate(1100 380) scale(.3333)" class="bold">
          <path d="M598 423l92-3 255 515-103-3z" fill="url(#face)"/>
          <path d="M598 423l185 405 12 8 48 96" fill="none"/>
          <path d="M690 420l15-15 257 520-17 10z" fill="#5c636f"/>
          <path d="M705 405l13-22 250 520-6 22z" fill="#6c7580"/>
          <path d="M730 430l238 473" fill="none"/>
          <path d="M715 383h27l256 519h-30z" fill="#727a86"/>
          <path d="M978 750l10-23h55l-30 70z" fill="#a9b6c6"/>
          <path d="M775 52L765 95 780 128 752 227 762 245 790 247C780 280 782 330 785 355L1000 785 1060 700 1098 842 1030 1047 1018 1037 1045 935 1008 870 998 902 742 383 752 348 720 267 690 357 680 350 683 325 752 72 758 82 770 52z" fill="#565b67"/>
          <path d="M720 267l-30 88 62-7z" fill="#6f7783"/>
          <path d="M612 375L690 357 752 348 742 382 715 383C708 410 705 418 690 420L598 423z" fill="#adbacd"/>
          <path d="M612 360h38l-15 33h-17z" fill="#666d79"/>
          <path d="M1008 870l37 65H945l23-32h30z" fill="#69707c"/>
          <path d="M782 130h70l16 20-10 50-30 20-76 7z" fill="#a8b5c6"/>
          <path d="M868 150l12 22-14 50-33 21-71 2-10-18 76-7 30-20zM828 220l5 23M858 200l8 22M780 225l8 20" fill="#666d79"/>
          <path d="M1030 695h28L1030 775C1022 795 1005 792 998 785z" fill="#a9b6c6"/>
          <path d="M1058 695l15 28-26 102-30 0-15-38c15 6 22 0 28-12z" fill="#565b67" stroke="none"/>
          <path d="M1058 695l15 28-26 102M1058 695l-28 80" fill="none"/>
          <path d="M1073 727h72l17 18-12 50-28 25-75 5z" fill="#a8b5c6"/>
          <path d="M1162 745l11 23-13 50-38 22-67 3-8-18 75-5 28-25zM1122 820v20M1150 795l10 23M1075 823l5 20" fill="#666d79"/>
        </g>
      </svg>
    </section>
  </main>

  <footer class="status">
    <div class="status-tools">
      <button class="pressed" aria-label="导航器"><svg><use href="#i-tree"/></svg></button>
      <button aria-label="浏览器"><svg><use href="#i-globe"/></svg></button>
      <button aria-label="全屏"><span class="pane"></span></button>
    </div>
    <ul class="messages">
      <li><svg><use href="#i-arrow"/></svg>选择要移除的曲面。</li>
      <li><span class="dot"></span>基准平面将不显示。</li>
    </ul>
    <div class="find">
      <button aria-label="查找"><svg><use href="#i-binoc"/></svg></button>
      <button class="drop" aria-label="查找列表"><i class="caret"></i></button>
    </div>
    <div class="filter">
      <select aria-label="选择过滤器"><option>几何</option></select>
      <i class="caret"></i>
    </div>
    <div class="watermark">
      <svg viewBox="0 0 60 56"><ellipse cx="22" cy="18" rx="22" ry="15" transform="rotate(35 22 18)" fill="none" stroke="#9db0c4" stroke-width="3"/><path d="M12 30c-6 8-2 16 8 16 10 0 18-8 22-16" fill="none" stroke="#bccbd8" stroke-width="2"/><path d="M35 22c10-8 20-6 21 4 1 12-12 26-27 27" fill="none" stroke="#ef9aa2" stroke-width="4"/></svg>
      <div><strong>野火论坛</strong><span>www.proewildfire.cn</span></div>
    </div>
  </footer>
  <script src="ribs.js"></script>
</body>
</html>
```

FILE: styles.css
```css
:root {
  --frame: #a0a0a0;
  --chrome: #e3e3e3;
  --panel: #eef0f2;
  --line: #a8abae;
  --text: #333;
  --dim: #aaa;
}

* {
  box-sizing: border-box;
}

body {
  margin: 0;
  height: 100vh;
  display: flex;
  flex-direction: column;
  border: 4px solid var(--frame);
  background: var(--chrome);
  color: var(--text);
  font: 12px/16px "Noto Sans", "Noto Sans CJK SC", sans-serif;
  overflow: hidden;
}

button {
  display: flex;
  align-items: center;
  justify-content: center;
  padding: 0;
  border: 0;
  background: none;
  color: inherit;
  font: inherit;
  white-space: nowrap;
}

button:disabled {
  color: var(--dim);
}

svg {
  width: 16px;
  height: 16px;
  flex: none;
}

ul {
  list-style: none;
  margin: 0;
  padding: 0;
}

.sprite {
  position: absolute;
  width: 0;
  height: 0;
}

.caret {
  border: 4px solid transparent;
  border-top: 4px solid #555;
  border-bottom: 0;
}

.caret.up {
  border-top: 0;
  border-bottom: 4px solid #555;
}

.caret.left {
  border: 4px solid transparent;
  border-right: 5px solid #888;
  border-left: 0;
}

.caret.right {
  border: 4px solid transparent;
  border-left: 5px solid #888;
  border-right: 0;
}

button:disabled .caret {
  border-top-color: #aaa;
}

/* Title bar */
.titlebar {
  display: grid;
  grid-template-columns: 1fr auto 1fr;
  align-items: center;
  height: 32px;
  flex: none;
  padding-bottom: 4px;
}

.titlebar h1 {
  margin: 0;
  font-size: 14px;
  line-height: 20px;
  font-weight: 400;
}

.quick {
  display: flex;
  height: 24px;
}

.quick button {
  width: 24px;
}

.quick .drop {
  width: 14px;
}

.quick .quick-app {
  width: 41px;
  margin-right: 2px;
  border-right: 1px solid var(--line);
}

.quick .quick-more {
  flex-direction: column;
  gap: 2px;
  border-left: 1px solid var(--line);
}

.quick-more::before {
  content: "";
  width: 8px;
  border-top: 1px solid #555;
}

.window-buttons {
  display: flex;
  justify-content: flex-end;
  gap: 15px;
  padding-right: 10px;
}

.window-buttons svg {
  width: 12px;
  height: 12px;
}

/* Ribbon tabs */
.tabs {
  display: flex;
  height: 26px;
  flex: none;
  font-size: 15px;
  line-height: 24px;
}

.tab {
  width: 71px;
  padding-bottom: 2px;
  background: #cdd0d3;
  border-right: 1px solid #dfe1e3;
  color: #444;
}

.tab.wide {
  width: 101px;
}

.tab.file {
  width: 80px;
  background: #676767;
  border: 0;
  color: #fff;
}

.tab.active {
  background: #f9f9f9;
  border: 0;
  color: #111;
}

.help-buttons {
  display: flex;
  gap: 8px;
  height: 17px;
  margin-left: auto;
  padding-right: 4px;
}

.help-buttons .drop {
  width: 8px;
}

/* Ribbon */
.ribbon {
  display: flex;
  flex: none;
  background: #f9f9f9;
  border-bottom: 1px solid #999;
}

.group {
  border-right: 1px solid var(--line);
}

.tools {
  display: flex;
  gap: 2px;
  height: 87px;
  padding: 1px 1px 0;
}

.group-name {
  width: 100%;
  height: 25px;
  gap: 2px;
  background: #eceef0;
}

.col {
  display: flex;
  flex-direction: column;
}

.col button {
  height: 28px;
  gap: 4px;
  justify-content: flex-start;
}

.col .caret {
  margin-left: 3px;
}

.col button:disabled svg {
  filter: grayscale(1);
  opacity: 0.6;
}

.big {
  flex-direction: column;
  justify-content: flex-start;
  width: 44px;
  padding-top: 5px;
}

.big.long {
  width: 56px;
}

.big svg {
  width: 32px;
  height: 32px;
  margin-bottom: 10px;
}

.big .caret {
  margin-top: 6px;
}

.ops { width: 129px; }
.ops .tools { padding-left: 3px; gap: 4px; }
.data { width: 107px; }
.data .tools { padding-left: 7px; }
.datum { width: 151px; }
.shape { width: 123px; }
.engineering { width: 151px; }
.engineering .tools { padding-left: 7px; gap: 7px; }
.edit { width: 215px; }
.edit .col + .col { margin-left: 6px; }
.surface { width: 127px; }
.surface .tools { padding-left: 3px; gap: 4px; }
.intent { width: 70px; }
.intent .tools { padding-left: 6px; }

/* Workspace */
main {
  display: flex;
  flex: 1;
  min-height: 0;
}

.navigator {
  display: flex;
  flex-direction: column;
  width: 194px;
  flex: none;
  background: var(--panel);
  border-right: 3px solid var(--frame);
}

.nav-tabs {
  display: flex;
  height: 30px;
  flex: none;
}

.nav-tabs button {
  flex: 1;
  gap: 4px;
  padding-right: 8px;
  background: #dcdee0;
  border: 1px solid var(--line);
  border-width: 1px 0 1px 1px;
}

.nav-tabs .active {
  flex: 0 0 75px;
  gap: 6px;
  padding: 0;
  background: none;
  border: 0;
}

.nav-tabs svg {
  height: 20px;
}

.nav-tabs button + button svg {
  width: 20px;
}

.tree-head {
  display: flex;
  align-items: center;
  justify-content: flex-end;
  gap: 10px;
  height: 28px;
  flex: none;
  padding-right: 8px;
}

.tree-head h2 {
  margin: 0;
  font-size: 12px;
  font-weight: 500;
}

.tree-head button {
  gap: 8px;
}

.tree-head svg {
  width: 18px;
  height: 20px;
}

.tree-box {
  display: grid;
  grid-template: minmax(0, 1fr) 15px / 1fr 15px;
  flex: 1;
  min-height: 0;
  margin: 0 6px 6px 8px;
  background: #fdfdfd;
  border-top: 1px solid #ccc;
}

.tree {
  display: flex;
  flex-direction: column;
  justify-content: flex-end;
  overflow: hidden;
}

.tree li {
  display: flex;
  align-items: center;
  gap: 5px;
  height: 24px;
  flex: none;
  padding-left: 24px;
  color: #444;
}

.tree .parent {
  padding-left: 10px;
}

.tree .parent::before {
  content: "";
  margin-right: 2px;
  border: 4px solid transparent;
  border-left: 7px solid #888;
  border-right: 0;
}

.tree .hidden-item {
  color: #bbb;
}

.vscroll {
  display: flex;
  flex-direction: column;
}

.hscroll {
  display: flex;
}

.vscroll button,
.hscroll button {
  width: 15px;
  height: 15px;
  flex: none;
  background: #fafafa;
  border: 1px solid #ccc;
}

.vscroll .caret {
  border-top-color: #888;
  border-bottom-color: #888;
}

.track {
  flex: 1;
  background: #dedfe1;
}

.thumb {
  background: #fafafa;
  border: 1px solid #b5b5b5;
}

.vscroll .track {
  padding-top: 73px;
}

.vscroll .thumb {
  height: 47%;
}

.hscroll .thumb {
  width: 87%;
  height: 15px;
}

.canvas {
  position: relative;
  flex: 1;
  min-width: 0;
  background: #fcfcfc;
}

.view-bar {
  position: absolute;
  top: 7px;
  left: 50%;
  display: flex;
  gap: 9px;
  padding: 6px 4px 6px 5px;
  background: #fcfcfc;
  border: 1px solid #999;
  transform: translateX(-50%);
}

.view-bar svg {
  width: 18px;
  height: 18px;
}

.view-bar .more {
  position: relative;
}

.view-bar .more::after {
  content: "";
  position: absolute;
  right: -3px;
  bottom: -1px;
  border-left: 3px solid transparent;
  border-bottom: 3px solid #444;
}

/* Part */
.part {
  display: block;
  width: 100%;
  height: 100%;
}

.part .lit,
.part .ink,
.part .line {
  stroke: #1d2430;
  stroke-width: 1;
  stroke-linejoin: round;
}

.part .lit {
  fill: #adbacd;
}

.part .line {
  fill: none;
}

.part .edge {
  fill: none;
  stroke: #3d4653;
  stroke-width: 2;
}

.part .bold {
  stroke: #1d2430;
  stroke-width: 3;
  stroke-linejoin: round;
}

.part .thin {
  stroke: #4b5460;
  stroke-width: 1;
}

/* Status bar */
.status {
  position: relative;
  display: flex;
  align-items: center;
  height: 47px;
  flex: none;
  background: var(--panel);
  border-top: 2px solid #999;
}

.status-tools {
  display: flex;
  align-items: center;
  gap: 4px;
  height: 22px;
  margin-top: 14px;
  padding: 0 9px 0 6px;
  border-right: 1px solid var(--line);
}

.status-tools button {
  width: 22px;
  height: 22px;
}

.status-tools .pressed {
  background: #dcdcdc;
  border: 1px solid #999;
}

.pane {
  width: 16px;
  height: 16px;
  background: linear-gradient(#fff, #cfe3ee);
  border: 1px solid #4a7f99;
}

.messages {
  padding-left: 3px;
  font-size: 11px;
}

.messages li {
  display: flex;
  align-items: center;
  gap: 1px;
}

.messages svg {
  width: 12px;
  height: 12px;
}

.dot {
  width: 4px;
  height: 4px;
  margin: 0 4px;
  border-radius: 2px;
  background: #1d5a7a;
}

.find {
  display: flex;
  margin: 10px 97px 0 auto;
  padding: 0 2px;
  border: solid var(--line);
  border-width: 0 1px;
}

.find button {
  width: 28px;
  height: 25px;
  background: #f8f8f8;
  border: 1px solid #bbb;
}

.find .drop {
  width: 15px;
  border-left: 0;
}

.find::before {
  content: "";
  margin: 0 42px 0 -45px;
  border-left: 1px solid var(--line);
}

.filter {
  display: flex;
  align-items: center;
  width: 177px;
  height: 25px;
  margin: 10px 18px 0 0;
  background: #f8f8f8;
  border: 1px solid #bbb;
}

.filter select {
  flex: 1;
  height: 100%;
  padding: 0 8px;
  appearance: none;
  background: none;
  border: 0;
  border-right: 1px solid #bbb;
  color: #666;
  font: inherit;
}

.filter .caret {
  margin: 0 3px;
}

.watermark {
  position: absolute;
  right: 4px;
  bottom: 4px;
  display: flex;
  opacity: 0.8;
  pointer-events: none;
}

.watermark svg {
  width: 56px;
  height: 56px;
}

.watermark div {
  display: flex;
  flex-direction: column;
}

.watermark strong {
  padding-left: 12px;
  color: #8ccba2;
  font: 900 29px/32px "Noto Sans CJK SC", sans-serif;
}

.watermark span {
  color: #b9dcd6;
  font: 15px/20px "Noto Sans", sans-serif;
}
```

FILE: ribs.js
```js
// Draws the slanted louvre bars and the teeth above and below them
const ribs = document.getElementById('ribs');

function shape(type, points, fill, cls) {
  const p = document.createElementNS('http://www.w3.org/2000/svg', type);
  p.setAttribute('points', points.map(pt => pt.join(',')).join(' '));
  p.setAttribute('fill', fill);
  if (cls) p.setAttribute('class', cls);
  ribs.appendChild(p);
}

// the left side of a tooth blends into the wall, only the rest gets an outline
function tooth(points) {
  shape('polygon', points, 'url(#tooth)');
  shape('polyline', points.slice(1), 'none', 'line');
}

// bars
for (let i = 0; i < 18; i++) {
  const tx = 585 + 40.8 * i;
  const ty = Math.max(527 - 1.75 * i, 499);
  const bx = 633 + 43.05 * i;
  const by = 612 + 3.6 * i - 0.055 * i * i;
  shape('polygon', [[tx - 2, ty], [tx - 8, ty + 15], [bx - 17, by + 9], [bx - 3, by + 10], [tx, ty]], '#6c7682', 'ink');
  shape('polygon', [[tx, ty], [tx + 8, ty], [bx, by], [bx - 3, by + 10]], '#595e69', 'ink');
}

// upper teeth
for (let i = 0; i < 20; i++) {
  const x = 542 + 40.7 * i;
  const y = Math.max(528 - 1.5 * i, 502);
  const top = x - Math.max(8, 18 - 1.5 * i);
  const topY = Math.min(489 + i, 499);
  const h = i > 15 ? 11 : 15;
  tooth([[top - 11, topY], [top, topY], [x, y], [x - 5, y + h], [x - 11, y + h]]);
}

// lower teeth
for (let i = 0; i < 20; i++) {
  const x = 575 + 43 * i;
  const y = 616 + 4.2 * i - 0.075 * i * i;
  const tx = 618 + 41.95 * i;
  const ty = 680 + i - 0.02 * i * i;
  if (i === 19) {
    tooth([[tx - 16, 692], [tx, 692], [tx - 4, 705], [tx - 9, 706]]);
    continue;
  }
  tooth([[x + 2, y + 14], [x + 8, y + 1], [tx, ty], [tx - 3, ty + 13], [tx - 9, ty + 14]]);
  shape('polygon', [[x, y], [x + 8, y + 1], [x + 3, y + 14], [x - 2, y + 13]], '#b4c1d3', 'ink');
}
```
